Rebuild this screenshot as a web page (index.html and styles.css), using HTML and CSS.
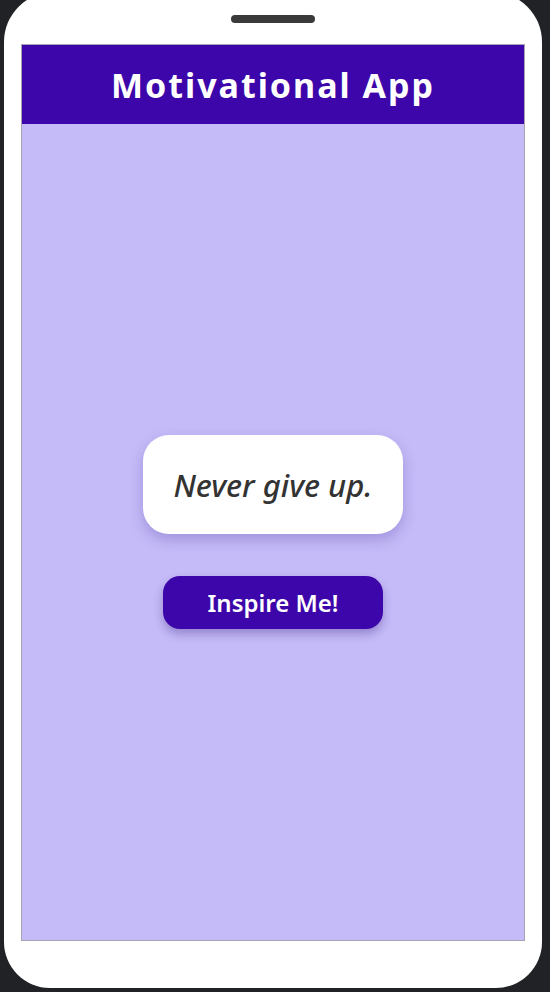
FILE: index.html
```html
<!DOCTYPE html>
<html lang="en">
<head>
<meta charset="utf-8">
<title>Motivational App</title>
<link rel="stylesheet" href="styles.css">
</head>
<body>
<div class="phone">
  <div class="notch"></div>
  <div class="screen">
    <header class="app-header">
      <h1 class="app-title">Motivational App</h1>
    </header>
    <main class="app-body">
      <div class="quote-card">
        <p class="quote-text">Never give up.</p>
      </div>
      <button class="inspire-btn">Inspire Me!</button>
    </main>
  </div>
</div>
</body>
</html>
```
FILE: styles.css
```css
* { box-sizing: border-box; }
html, body {
  margin: 0;
  padding: 0;
  height: 100%;
  overflow: hidden;
}
body {
  background: #202226;
  font-family: "Noto Sans", "Open Sans", sans-serif;
}
.phone {
  margin: -8px 0 0 4px;
  width: 538px;
  height: 996px;
  background: #ffffff;
  border-radius: 50px 50px 46px 46px;
  padding: 52px 17px 0 17px;
  position: relative;
}
.notch {
  position: absolute;
  top: 23px;
  left: 227px;
  width: 84px;
  height: 8px;
  border-radius: 4px;
  background: #3a3a3a;
}
.screen {
  width: 504px;
  height: 897px;
  border: 1px solid #a6a3b3;
  display: flex;
  flex-direction: column;
  background: #c5bbf8;
}
.app-header {
  height: 79px;
  flex: none;
  background: #3d06aa;
  display: flex;
  align-items: center;
  justify-content: center;
}
.app-title {
  margin: 0;
  color: #ffffff;
  font-size: 34px;
  font-weight: 700;
  letter-spacing: 2px;
  line-height: 1;
}
.app-body {
  flex: 1;
  display: flex;
  flex-direction: column;
  align-items: center;
  justify-content: center;
  gap: 42px;
}
.quote-card {
  width: 260px;
  height: 99px;
  background: #ffffff;
  border-radius: 26px;
  box-shadow: 0 6px 14px rgba(60, 30, 140, 0.25);
  display: flex;
  align-items: center;
  justify-content: center;
}
.quote-text {
  margin: 0;
  font-size: 31px;
  font-style: italic;
  font-weight: 500;
  color: #333333;
}
.inspire-btn {
  width: 220px;
  height: 53px;
  border: none;
  border-radius: 17px;
  background: #3d06aa;
  color: #ffffff;
  font-family: "Noto Sans", "Open Sans", sans-serif;
  font-size: 24px;
  font-weight: 600;
  box-shadow: 0 5px 10px rgba(40, 10, 110, 0.3);
}
```
